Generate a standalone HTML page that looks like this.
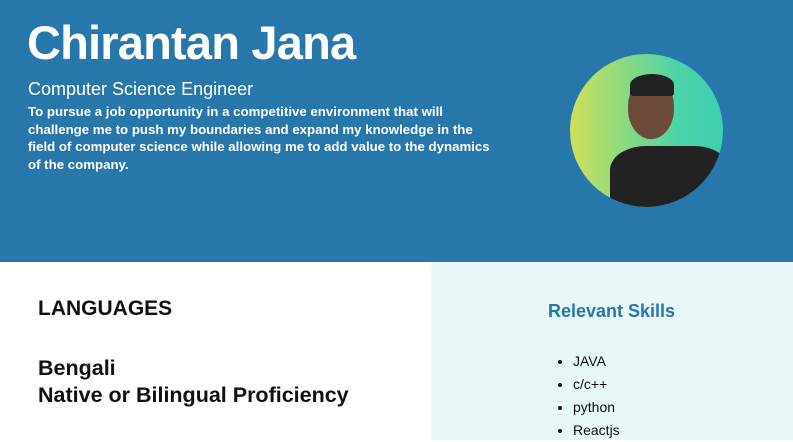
<!DOCTYPE html><html><head><style>
body{margin:0;width:793px;height:440px;overflow:hidden;font-family:"Liberation Sans",sans-serif;background:#fff;position:relative}
.hdr{position:absolute;left:0;top:0;width:793px;height:262px;background:#2777ab;color:#fff}
.name{position:absolute;left:27px;top:15px;font-size:47px;font-weight:bold;letter-spacing:-0.8px}
.role{position:absolute;left:28px;top:79px;font-size:18px}
.obj{position:absolute;left:28px;top:103px;white-space:nowrap;font-size:13.25px;line-height:17.5px;font-weight:bold}
.pic{position:absolute;left:570px;top:54px;width:153px;height:153px;border-radius:50%;background:linear-gradient(90deg,#cfe05a,#4cd3a8 70%,#3fcfb0);overflow:hidden}
.right{position:absolute;left:431px;top:262px;width:362px;height:178px;background:#e8f7f7}
.l{position:absolute;left:38px;font-weight:bold;color:#111}
ul{position:absolute;left:555px;top:350px;margin:0;padding:0 0 0 18px;font-size:14px;line-height:23px;color:#111}
</style></head><body>
<div class="hdr">
<div class="name">Chirantan Jana</div>
<div class="role">Computer Science Engineer</div>
<div class="obj">To pursue a job opportunity in a competitive environment that will<br>challenge me to push my boundaries and expand my knowledge in the<br>field of computer science while allowing me to add value to the dynamics<br>of the company.</div>
<div class="pic">
<div style="position:absolute;left:58px;top:25px;width:46px;height:60px;border-radius:45% 45% 50% 50%;background:#6b4a38"></div>
<div style="position:absolute;left:60px;top:20px;width:44px;height:22px;border-radius:50% 50% 10% 10%;background:#222"></div>
<div style="position:absolute;left:40px;top:92px;width:120px;height:80px;border-radius:30% 30% 0 0;background:#222"></div>
</div>
</div>
<div class="right"></div>
<div class="l" style="top:297px;font-size:21px">LANGUAGES</div>
<div class="l" style="top:355px;font-size:21.5px;line-height:27px">Bengali<br>Native or Bilingual Proficiency</div>
<div style="position:absolute;left:548px;top:301px;font-size:18px;font-weight:bold;color:#2777ab">Relevant Skills</div>
<ul><li>JAVA</li><li>c/c++</li><li>python</li><li>Reactjs</li></ul>
</body></html>
